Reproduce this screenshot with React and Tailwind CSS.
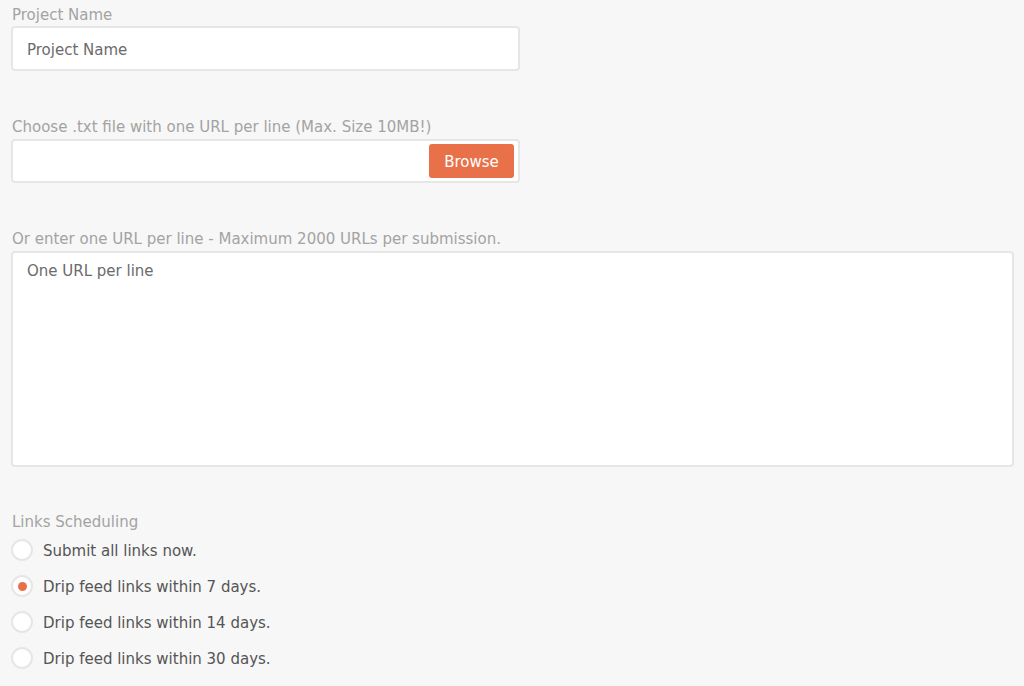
import React, { useState } from 'react';

const options = [
  'Submit all links now.',
  'Drip feed links within 7 days.',
  'Drip feed links within 14 days.',
  'Drip feed links within 30 days.',
];

const App = () => {
  const [schedule, setSchedule] = useState(1);

  return (
    <div className="min-h-screen bg-[#f7f7f7] pl-[11px] pt-[5px] text-[15px] font-['DejaVu_Sans',sans-serif]">
      <div className="mb-[46px]">
        <label className="block leading-5 mb-[1px] pl-[1px] text-[#a3a3a3]">Project Name</label>
        <input
          type="text"
          placeholder="Project Name"
          className="w-[509px] h-[45px] bg-white border-2 border-[#e6e6e6] rounded-[4px] px-[14px] pt-[2px] text-[#666] placeholder:text-[#6b6b6b] outline-none"
        />
      </div>

      <div className="mb-[46px]">
        <label className="block leading-5 mb-[2px] pl-[1px] text-[#a3a3a3]">
          Choose .txt file with one URL per line (Max. Size 10MB!)
        </label>
        <div className="w-[509px] h-[44px] bg-white border-2 border-[#e6e6e6] rounded-[4px] flex items-center justify-end pr-[4px]">
          <button className="w-[85px] h-[34px] pt-[3px] bg-[#e9714a] text-white rounded-[3px]">Browse</button>
        </div>
      </div>

      <div className="mb-[45px]">
        <label className="block leading-5 mb-[2px] pl-[1px] text-[#a3a3a3]">
          Or enter one URL per line - Maximum 2000 URLs per submission.
        </label>
        <textarea
          placeholder="One URL per line"
          className="block w-[1003px] h-[216px] bg-white border-2 border-[#e6e6e6] rounded-[4px] px-[14px] py-[7px] text-[#666] placeholder:text-[#6b6b6b] outline-none resize-none"
        />
      </div>

      <div>
        <label className="block leading-5 pl-[1px] text-[#a3a3a3]">Links Scheduling</label>
        {options.map((opt, i) => (
          <div
            key={opt}
            onClick={() => setSchedule(i)}
            className="h-[36px] flex items-center cursor-pointer"
          >
            <span className="w-[22px] h-[22px] rounded-full bg-white border-2 border-[#e6e6e6] flex items-center justify-center">
              {schedule === i && <span className="w-[9px] h-[9px] rounded-full bg-[#e9714a]" />}
            </span>
            <span className="ml-[10px] pt-[2px] text-[#555]">{opt}</span>
          </div>
        ))}
      </div>
    </div>
  );
};

export default App;
